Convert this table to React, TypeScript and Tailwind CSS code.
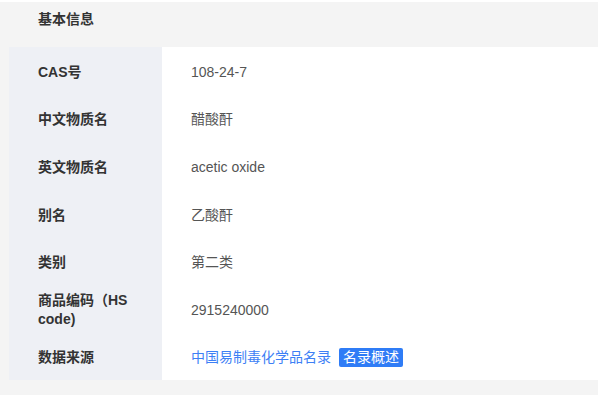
const rows: { label: string; value: React.ReactNode }[] = [
  { label: "CAS号", value: "108-24-7" },
  { label: "中文物质名", value: "醋酸酐" },
  { label: "英文物质名", value: "acetic oxide" },
  { label: "别名", value: "乙酸酐" },
  { label: "类别", value: "第二类" },
  { label: "商品编码（HS code)", value: "2915240000" },
  {
    label: "数据来源",
    value: (
      <span className="flex items-center gap-2">
        <a href="#" className="text-[#3d7ff5]">中国易制毒化学品名录</a>
        <span className="rounded-[2px] bg-[#2f7cf6] px-1 leading-[19px] text-white">名录概述</span>
      </span>
    ),
  },
];

export default function App() {
  return (
    <div
      className="h-[398px] w-[600px] bg-white pt-[2px] pr-[2px] text-[14px]"
      style={{ fontFamily: '"Liberation Sans", "Noto Sans CJK SC", sans-serif' }}
    >
      <div className="bg-[#f4f4f4] pb-[15px] pl-[9px]">
        {/* 标题 */}
        <div className="h-[45px] pl-[29px] pt-[7px] font-bold text-[#333]">基本信息</div>

        {/* 信息表 */}
        <div className="grid grid-cols-[153px_1fr] bg-white">
          {rows.map((r) => (
            <div key={r.label} className="contents">
              <div className="flex h-[47.6px] items-center bg-[#eef0f5] pl-[29px] pr-[28px] pt-[3px] font-bold leading-[19px] text-[#333]">
                {r.label}
              </div>
              <div className="flex h-[47.6px] items-center pl-[29px] pt-[3px] text-[#555]">{r.value}</div>
            </div>
          ))}
        </div>
      </div>
    </div>
  );
}
